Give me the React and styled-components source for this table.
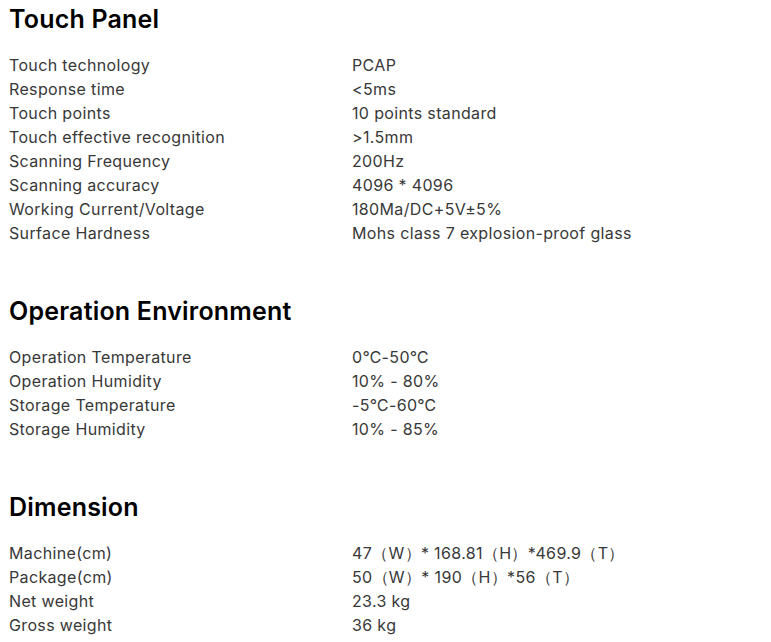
import React from "react";
import styled, { createGlobalStyle } from "styled-components";

const GlobalStyle = createGlobalStyle`
  body {
    margin: 0;
    background: #ffffff;
    font-family: Inter, "Noto Sans", sans-serif;
  }
`;

const Page = styled.div`
  padding: 4px 8px 0 9px;
`;

const Section = styled.section`
  & + & {
    margin-top: 51px;
  }
`;

const Heading = styled.h2`
  margin: 0 0 19px 0;
  font-size: 25px;
  line-height: 30px;
  font-weight: 600;
  letter-spacing: 0.2px;
  color: #000000;
`;

const SpecTable = styled.div`
  display: grid;
  grid-template-columns: 343px 1fr;
  font-size: 16px;
  line-height: 24px;
  letter-spacing: 0.35px;
  color: #383838;
`;

const Cell = styled.div`
  white-space: nowrap;
`;

const sections = [
  {
    title: "Touch Panel",
    rows: [
      ["Touch technology", "PCAP"],
      ["Response time", "<5ms"],
      ["Touch points", "10 points standard"],
      ["Touch effective recognition", ">1.5mm"],
      ["Scanning Frequency", "200Hz"],
      ["Scanning accuracy", "4096 * 4096"],
      ["Working Current/Voltage", "180Ma/DC+5V±5%"],
      ["Surface Hardness", "Mohs class 7 explosion-proof glass"],
    ],
  },
  {
    title: "Operation Environment",
    rows: [
      ["Operation Temperature", "0℃-50℃"],
      ["Operation Humidity", "10% - 80%"],
      ["Storage Temperature", "-5℃-60℃"],
      ["Storage Humidity", "10% - 85%"],
    ],
  },
  {
    title: "Dimension",
    rows: [
      ["Machine(cm)", "47（W）* 168.81（H）*469.9（T）"],
      ["Package(cm)", "50（W）* 190（H）*56（T）"],
      ["Net weight", "23.3 kg"],
      ["Gross weight", "36 kg"],
    ],
  },
];

export default function App() {
  return (
    <>
      <GlobalStyle />
      <Page>
        {sections.map((s) => (
          <Section key={s.title}>
            <Heading>{s.title}</Heading>
            <SpecTable>
              {s.rows.map(([label, value]) => (
                <React.Fragment key={label}>
                  <Cell>{label}</Cell>
                  <Cell>{value}</Cell>
                </React.Fragment>
              ))}
            </SpecTable>
          </Section>
        ))}
      </Page>
    </>
  );
}
